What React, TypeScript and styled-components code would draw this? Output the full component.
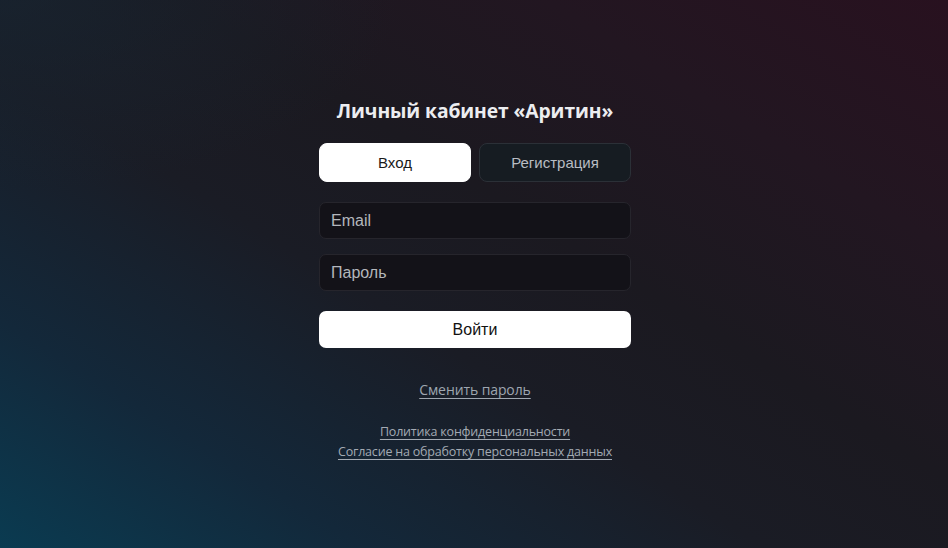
import { useState } from 'react';
import styled, { createGlobalStyle } from 'styled-components';

const GlobalStyle = createGlobalStyle`
  html, body {
    margin: 0;
    padding: 0;
    height: 100%;
  }
  #root {
    height: 100%;
  }
`

const Page = styled.div`
  min-height: 548px;
  height: 100%;
  display: flex;
  justify-content: center;
  align-items: flex-start;
  padding: 97px 0 0 2px;
  box-sizing: border-box;
  background:
    radial-gradient(ellipse 60% 50% at 0% 0%, rgba(22, 40, 54, 0.55), transparent 70%),
    linear-gradient(32deg, #0a3b51 0%, #13283a 20%, #1a1c25 42%, #1b1920 58%, #221621 78%, #28111f 100%);
  font-family: "Liberation Sans", Arial, sans-serif;
`

const Form = styled.div`
  width: 312px;
  display: flex;
  flex-direction: column;
`

const Title = styled.h1`
  margin: 0 0 18px;
  text-align: center;
  font-family: "Open Sans", "Noto Sans", sans-serif;
  font-weight: 700;
  font-size: 19.3px;
  line-height: 28px;
  color: #ecedf0;
  letter-spacing: -0.1px;
`

const Tabs = styled.div`
  display: grid;
  grid-template-columns: 1fr 1fr;
  gap: 8px;
  margin-bottom: 20px;
`

const Tab = styled.button<{ $active?: boolean }>`
  height: 39px;
  border-radius: 8px;
  border: 1px solid ${p => (p.$active ? '#ffffff' : '#2b3037')};
  background: ${p => (p.$active ? '#ffffff' : '#161c22')};
  color: ${p => (p.$active ? '#1a1a1a' : '#b9bdc3')};
  font-family: "Liberation Sans", Arial, sans-serif;
  font-size: 15px;
  cursor: pointer;
`

const Field = styled.input`
  height: 37px;
  box-sizing: border-box;
  border-radius: 7px;
  border: 1px solid #26252c;
  background: #131218;
  padding: 0 11px;
  color: #e0e2e6;
  font-family: "Liberation Sans", Arial, sans-serif;
  font-size: 16px;
  margin-bottom: 15px;
  outline: none;

  &::placeholder {
    color: #b4b7bc;
  }
`

const Submit = styled.button`
  height: 37px;
  margin-top: 5px;
  border-radius: 7px;
  border: none;
  background: #ffffff;
  color: #111111;
  font-family: "Liberation Sans", Arial, sans-serif;
  font-size: 16px;
  cursor: pointer;
`

const Links = styled.div`
  display: flex;
  flex-direction: column;
  align-items: center;
`

const LinkText = styled.a<{ $small?: boolean }>`
  color: ${p => (p.$small ? '#a3aab3' : '#9ea6b0')};
  font-family: "Open Sans", "Noto Sans", sans-serif;
  font-size: ${p => (p.$small ? '12.5px' : '14px')};
  line-height: 20px;
  letter-spacing: ${p => (p.$small ? '-0.2px' : '-0.1px')};
  text-decoration: underline;
  text-underline-offset: 3px;
  cursor: pointer;
`

const MainLinkRow = styled.div`
  margin: 32px 0 22px;
`

export default function App() {
  const [tab, setTab] = useState<'login' | 'register'>('login');

  return (
    <>
      <GlobalStyle />
      <Page>
        <Form>
          <Title>Личный кабинет «Аритин»</Title>
          <Tabs>
            <Tab $active={tab === 'login'} onClick={() => setTab('login')}>Вход</Tab>
            <Tab $active={tab === 'register'} onClick={() => setTab('register')}>Регистрация</Tab>
          </Tabs>
          <Field placeholder="Email" />
          <Field placeholder="Пароль" type="password" />
          <Submit>Войти</Submit>
          <Links>
            <MainLinkRow>
              <LinkText>Сменить пароль</LinkText>
            </MainLinkRow>
            <LinkText $small>Политика конфиденциальности</LinkText>
            <LinkText $small>Согласие на обработку персональных данных</LinkText>
          </Links>
        </Form>
      </Page>
    </>
  )
}
